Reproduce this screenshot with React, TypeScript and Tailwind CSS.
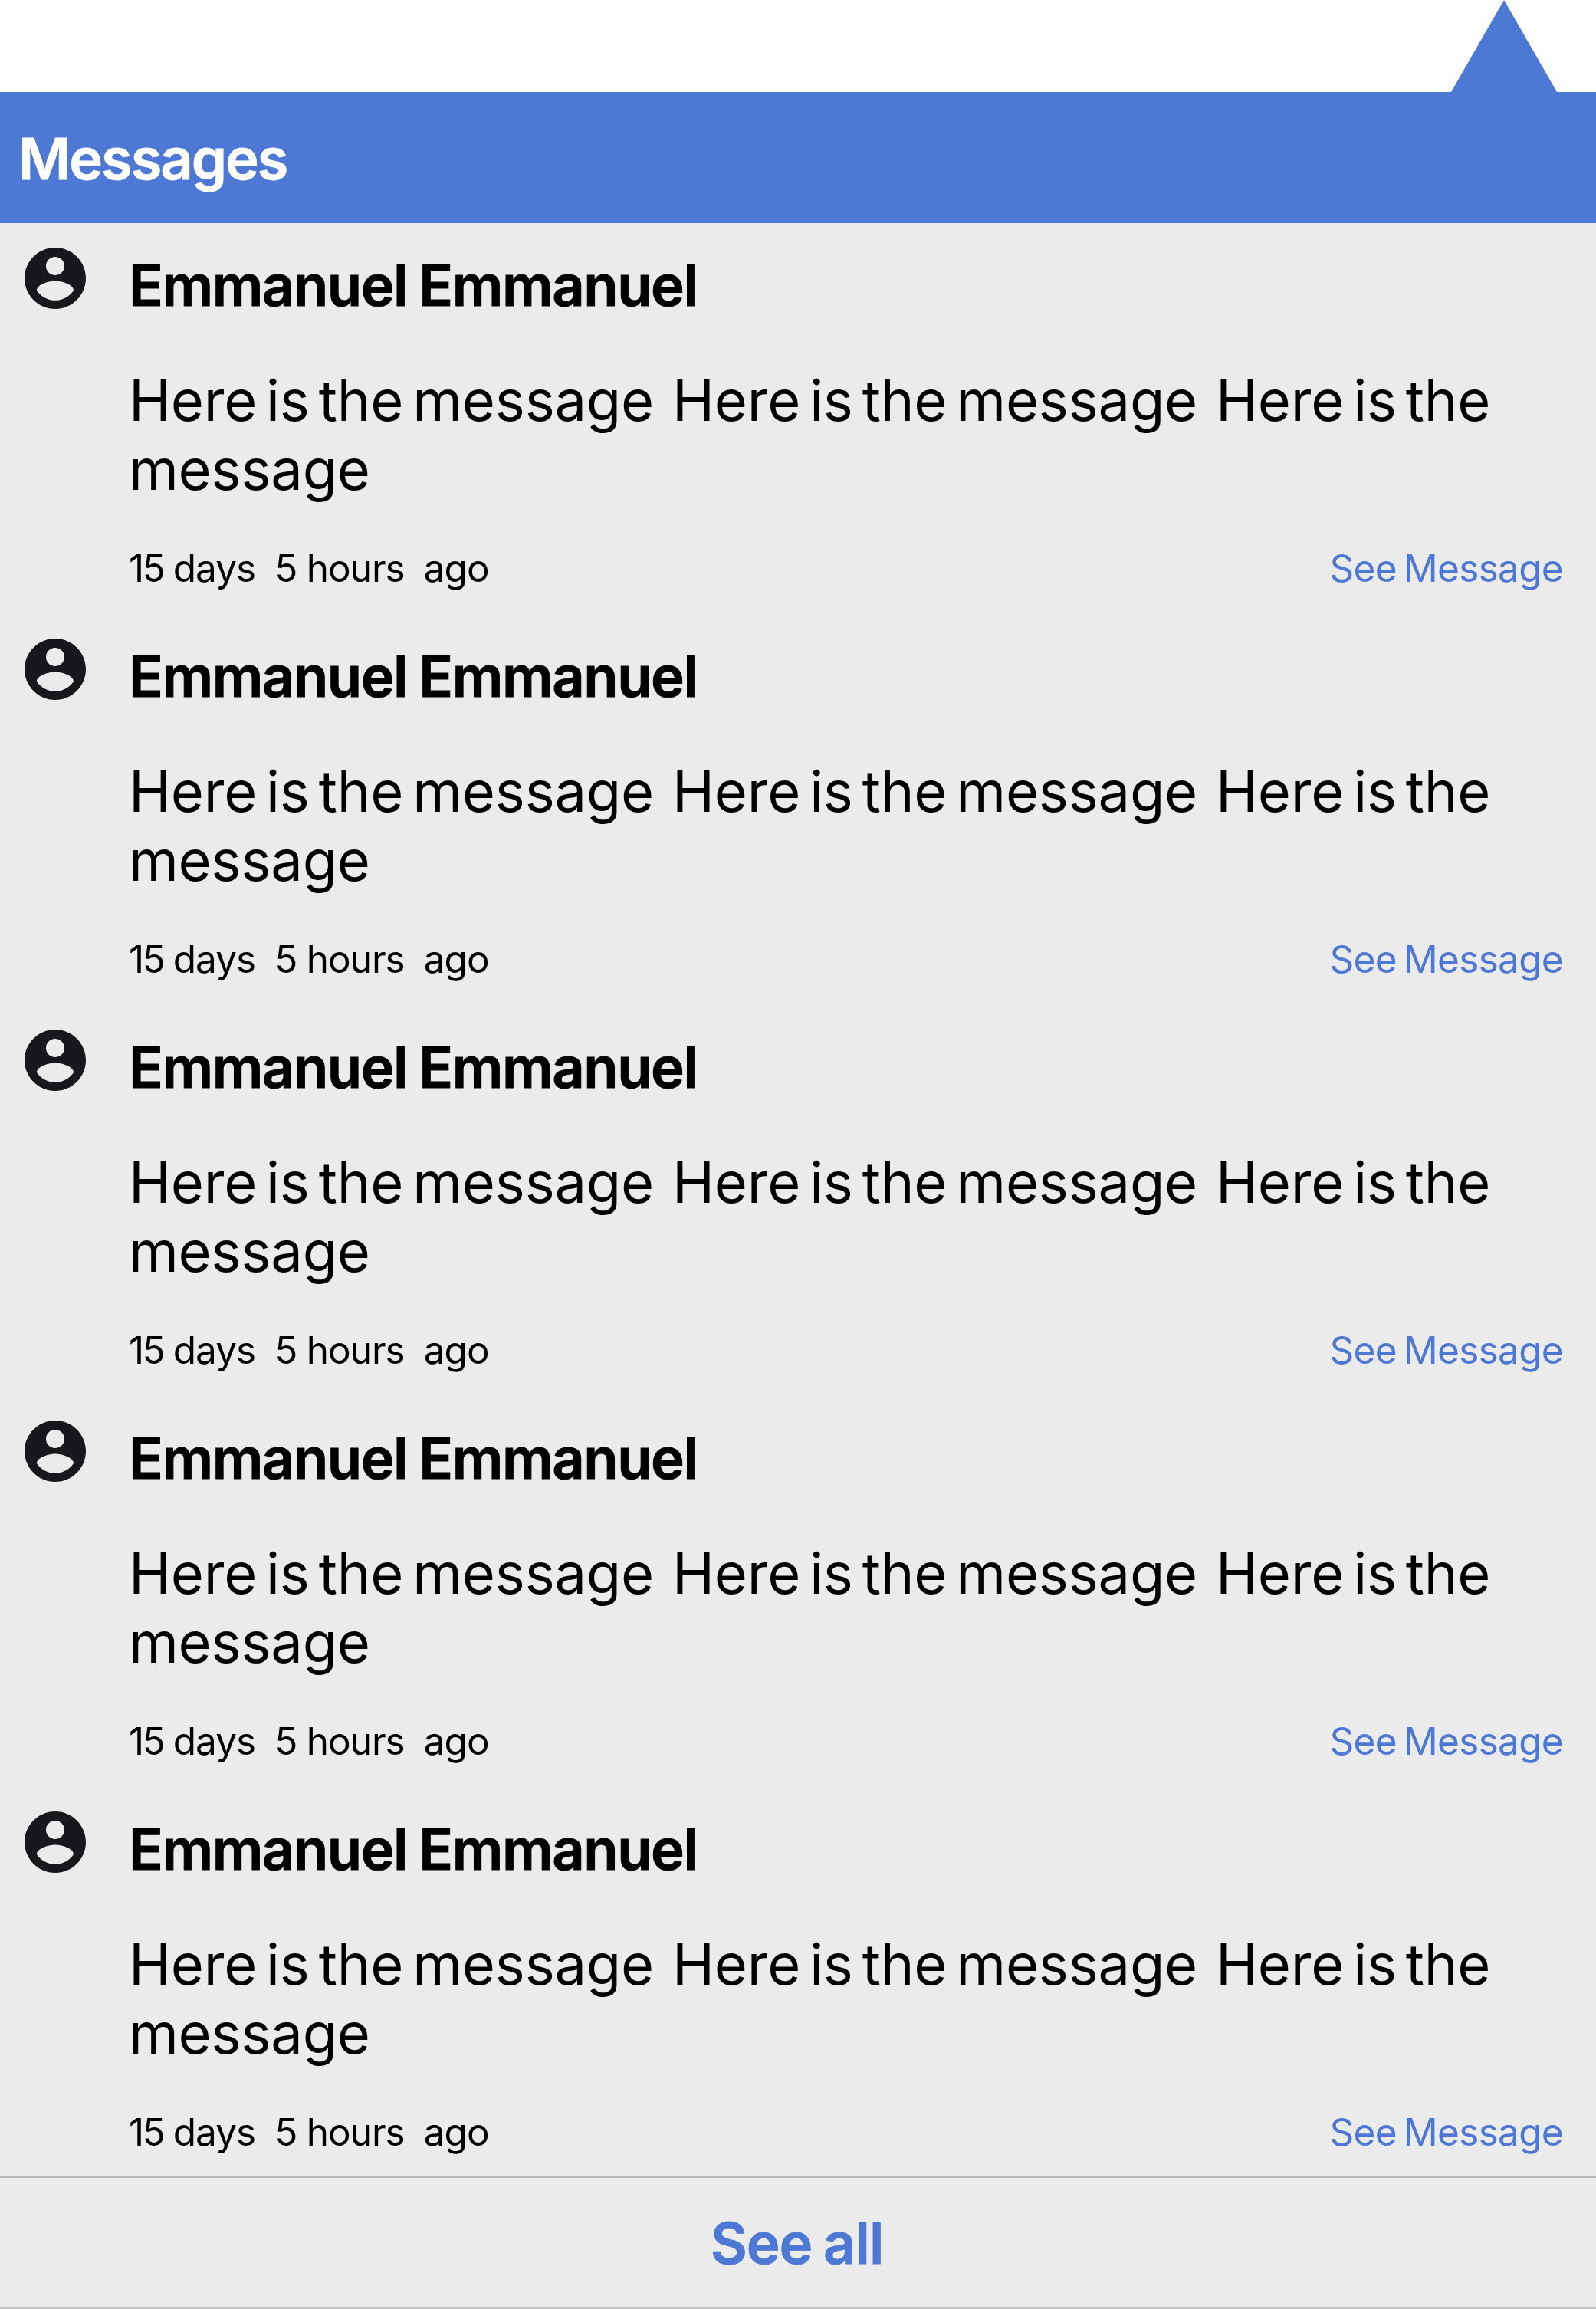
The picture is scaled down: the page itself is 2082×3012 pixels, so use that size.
const messages = [1, 2, 3, 4, 5];

function AccountIcon() {
  return (
    <svg viewBox="0 0 24 24" className="ml-6 mt-6 size-24 shrink-0 fill-[#17181c]">
      <path d="M12 2C6.48 2 2 6.48 2 12s4.48 10 10 10 10-4.48 10-10S17.52 2 12 2zm0 3c1.66 0 3 1.34 3 3s-1.34 3-3 3-3-1.34-3-3 1.34-3 3-3zm0 14.2c-2.5 0-4.71-1.28-6-3.22.03-1.99 4-3.08 6-3.08 1.99 0 5.97 1.09 6 3.08-1.29 1.94-3.5 3.22-6 3.22z" />
    </svg>
  );
}

function MessageItem() {
  return (
    <li className="flex h-[510px]">
      <AccountIcon />
      <div className="ml-[48px] flex-1 pt-[36px]">
        <h2 className="whitespace-nowrap text-[74px] font-semibold leading-[90px] tracking-[-1.4px] [-webkit-text-stroke:1px_#000] [word-spacing:-2px]">
          Emmanuel Emmanuel
        </h2>
        <p className="mt-[60px] whitespace-pre text-[74px] leading-[90px] tracking-[-0.2px] [word-spacing:-8.6px]">
          {"Here is the message  Here is the message  Here is the\nmessage"}
        </p>
        <div className="mt-[54px] flex justify-between pr-[43px] text-[49.5px] leading-[60px]">
          <span className="whitespace-pre tracking-[-1px] [word-spacing:-0.4px]">
            <span className="tracking-[-2.5px]">15</span>
            {" days  5 hours  ago"}
          </span>
          <a className="tracking-[-0.7px] text-[#4d79d4] [word-spacing:-4px]">See Message</a>
        </div>
      </div>
    </li>
  );
}

export default function App() {
  return (
    <div className="h-[3012px] w-[2082px] overflow-hidden bg-white font-[Inter,sans-serif] text-black">
      <div className="flex h-[120px] justify-end pr-[51px]">
        <svg viewBox="0 0 138 120" className="h-[120px] w-[138px] fill-[#4d79d4]">
          <path d="M69 0 138 120H0Z" />
        </svg>
      </div>
      <header className="flex h-[171px] items-center bg-[#4d79d4] pl-[24px] pt-[3px]">
        <h1 className="text-[74px] font-semibold leading-[90px] tracking-[-2px] text-white [-webkit-text-stroke:0.8px_#fff]">Messages</h1>
      </header>
      <ul className="h-[2550px] border-b-[3px] border-[#b8b8ba] bg-[#ebebeb]">
        {messages.map((id) => (
          <MessageItem key={id} />
        ))}
      </ul>
      <footer className="flex h-[171px] items-center justify-center border-b-[3px] border-[#c4c4c4] bg-[#ebebeb] pr-[3px] pt-[2px]">
        <a className="text-[74px] font-semibold leading-[90px] tracking-[-1px] text-[#4d79d4] [-webkit-text-stroke:0.8px_#4d79d4] [word-spacing:-3px]">See all</a>
      </footer>
    </div>
  );
}
